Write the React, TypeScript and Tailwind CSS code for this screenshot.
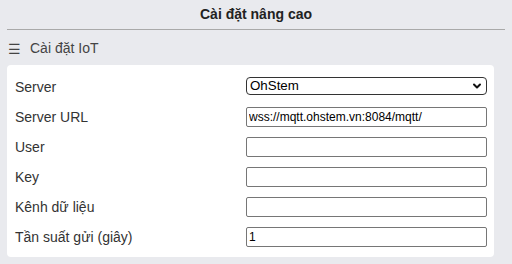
import React from "react";

const rows = [
  { label: "Server URL", value: "wss://mqtt.ohstem.vn:8084/mqtt/" },
  { label: "User", value: "" },
  { label: "Key", value: "" },
  { label: "Kênh dữ liệu", value: "" },
  { label: "Tần suất gửi (giây)", value: "1" },
];

export default function App() {
  return (
    <div className="w-[512px] h-[264px] bg-[#e9eaee] font-['Liberation_Sans',Arial,sans-serif] text-[#333] overflow-hidden">
      {/* Title */}
      <div className="h-[29px] flex items-center justify-center text-[14px] font-bold text-[#222]">
        Cài đặt nâng cao
      </div>
      <div className="mx-[7px] h-px bg-[#a9a9a9]" />

      {/* Section header */}
      <div className="h-[35px] flex items-center pl-[8px] pt-[2px] text-[14px] text-[#444]">
        <span className="w-[22px] text-[14px] leading-none">☰</span>
        <span>Cài đặt IoT</span>
      </div>

      {/* Card */}
      <div className="ml-[7px] w-[487px] bg-white rounded-[4px] pt-[7px] pb-[5px] pl-[8px] pr-[7px]">
        <div className="flex items-center h-[30px]">
          <label className="w-[231px] text-[14px] text-[#333]">Server</label>
          <div className="flex-1 h-[18px] mb-[2px] border border-[#333] rounded-[4px] flex items-center justify-between pl-[3px] pr-[4px] text-[13.33px] text-black">
            <span>OhStem</span>
            <svg width="10" height="10" viewBox="0 0 10 10" fill="none" stroke="#111" strokeWidth="2" strokeLinecap="round" strokeLinejoin="round">
              <path d="M2 3.5 L5 6.5 L8 3.5" />
            </svg>
          </div>
        </div>
        {rows.map((r) => (
          <div key={r.label} className="flex items-center h-[30px]">
            <label className="w-[231px] text-[14px] text-[#333]">{r.label}</label>
            <input
              readOnly
              value={r.value}
              className="flex-1 h-[20px] border border-[#767676] rounded-[2px] px-[2px] text-[12px] text-black outline-none font-['Liberation_Sans',Arial,sans-serif]"
            />
          </div>
        ))}
      </div>
    </div>
  );
}
